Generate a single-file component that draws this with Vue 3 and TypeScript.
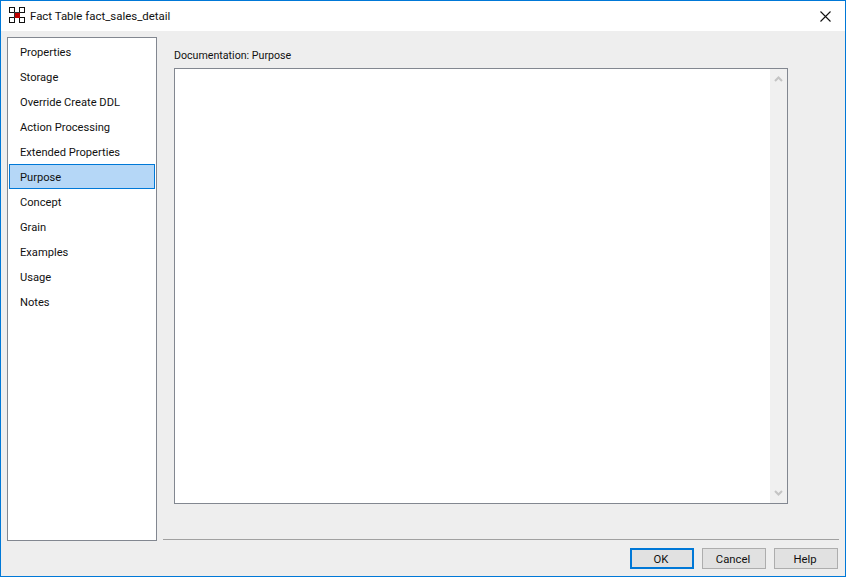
<script setup lang="ts">
const items: string[] = ['Properties', 'Storage', 'Override Create DDL', 'Action Processing', 'Extended Properties', 'Purpose', 'Concept', 'Grain', 'Examples', 'Usage', 'Notes']
const selected = 'Purpose'
</script>

<template>
  <div class="window">
    <header class="titlebar">
      <svg class="app-icon" width="16" height="16" viewBox="0 0 16 16" shape-rendering="crispEdges">
        <rect x="0.5" y="0.5" width="5" height="5" fill="#fff" stroke="#111" />
        <rect x="10.5" y="0.5" width="5" height="5" fill="#fff" stroke="#111" />
        <rect x="0.5" y="10.5" width="5" height="5" fill="#fff" stroke="#111" />
        <rect x="10.5" y="10.5" width="5" height="5" fill="#fff" stroke="#111" />
        <rect x="5" y="5" width="6" height="6" fill="#333" />
        <rect x="6" y="6" width="5" height="5" fill="#c00000" />
      </svg>
      <span class="title">Fact Table fact_sales_detail</span>
      <svg class="close" width="11" height="11" viewBox="0 0 11 11">
        <path d="M0.5 0.5L10.5 10.5M10.5 0.5L0.5 10.5" stroke="#111" stroke-width="1.1" fill="none" />
      </svg>
    </header>
    <main class="body">
      <div class="content">
        <nav class="list">
          <div v-for="item in items" :key="item" class="item" :class="{ selected: item === selected }">{{ item }}</div>
        </nav>
        <section class="panel">
          <label class="caption">Documentation: Purpose</label>
          <div class="memo">
            <div class="memo-text"></div>
            <div class="scrollbar">
              <svg width="9" height="6" viewBox="0 0 9 6"><path d="M1 5L4.5 1.5L8 5" stroke="#c4c4c4" stroke-width="2" fill="none" /></svg>
              <svg width="9" height="6" viewBox="0 0 9 6"><path d="M1 1L4.5 4.5L8 1" stroke="#c4c4c4" stroke-width="2" fill="none" /></svg>
            </div>
          </div>
        </section>
      </div>
      <footer class="footer">
        <div class="rule"></div>
        <div class="buttons">
          <button class="btn default">OK</button>
          <button class="btn">Cancel</button>
          <button class="btn">Help</button>
        </div>
      </footer>
    </main>
  </div>
</template>

<style>
html, body { margin: 0; background: #fff; }
</style>

<style scoped>
.window {
  box-sizing: border-box;
  width: 846px;
  height: 577px;
  border: 1px solid #0078d7;
  display: flex;
  flex-direction: column;
  font-family: Roboto, "Noto Sans", sans-serif;
  font-size: 11.15px;
  color: #111;
  background: #eee;
}
.titlebar {
  height: 30px;
  flex: none;
  background: #fff;
  display: flex;
  align-items: center;
  padding: 0 14px 0 8px;
}
.app-icon { flex: none; margin: 0 5px 2px 0; }
.title { flex: 1; font-size: 11.45px; }
.close { flex: none; }
.body { flex: 1; display: flex; flex-direction: column; min-height: 0; }
.content { display: flex; height: 504px; padding: 6px 0 0 6px; box-sizing: border-box; flex: none; }
.list {
  box-sizing: border-box;
  width: 150px;
  height: 504px;
  border: 1px solid #828790;
  background: #fff;
  padding: 1px;
  flex: none;
}
.item {
  box-sizing: border-box;
  height: 25px;
  line-height: 27px;
  padding-left: 11px;
}
.item.selected {
  background: #b5d7f7;
  outline: 1px solid #0078d7;
  outline-offset: -1px;
}
.panel { margin-left: 17px; display: flex; flex-direction: column; }
.caption { height: 31px; line-height: 37px; font-size: 10.65px; }
.memo {
  box-sizing: border-box;
  width: 614px;
  height: 436px;
  border: 1px solid #828790;
  background: #fff;
  display: flex;
}
.memo-text { flex: 1; }
.scrollbar {
  width: 17px;
  background: #f0f0f0;
  display: flex;
  flex-direction: column;
  justify-content: space-between;
  align-items: center;
  padding: 7px 0;
  box-sizing: border-box;
}
.footer { flex: 1; padding-left: 162px; display: flex; flex-direction: column; }
.rule { height: 1px; background: #a0a0a0; width: 676px; margin-top: 4px; }
.buttons { display: flex; gap: 8px; margin-top: 8px; margin-left: 467px; }
.btn {
  box-sizing: border-box;
  width: 64px;
  height: 21px;
  border: 1px solid #adadad;
  background: #e1e1e1;
  font: inherit;
  font-size: 11.3px;
  color: #111;
  padding: 2px 2px 0 0;
}
.btn.default { border: 2px solid #0078d7; }
</style>
